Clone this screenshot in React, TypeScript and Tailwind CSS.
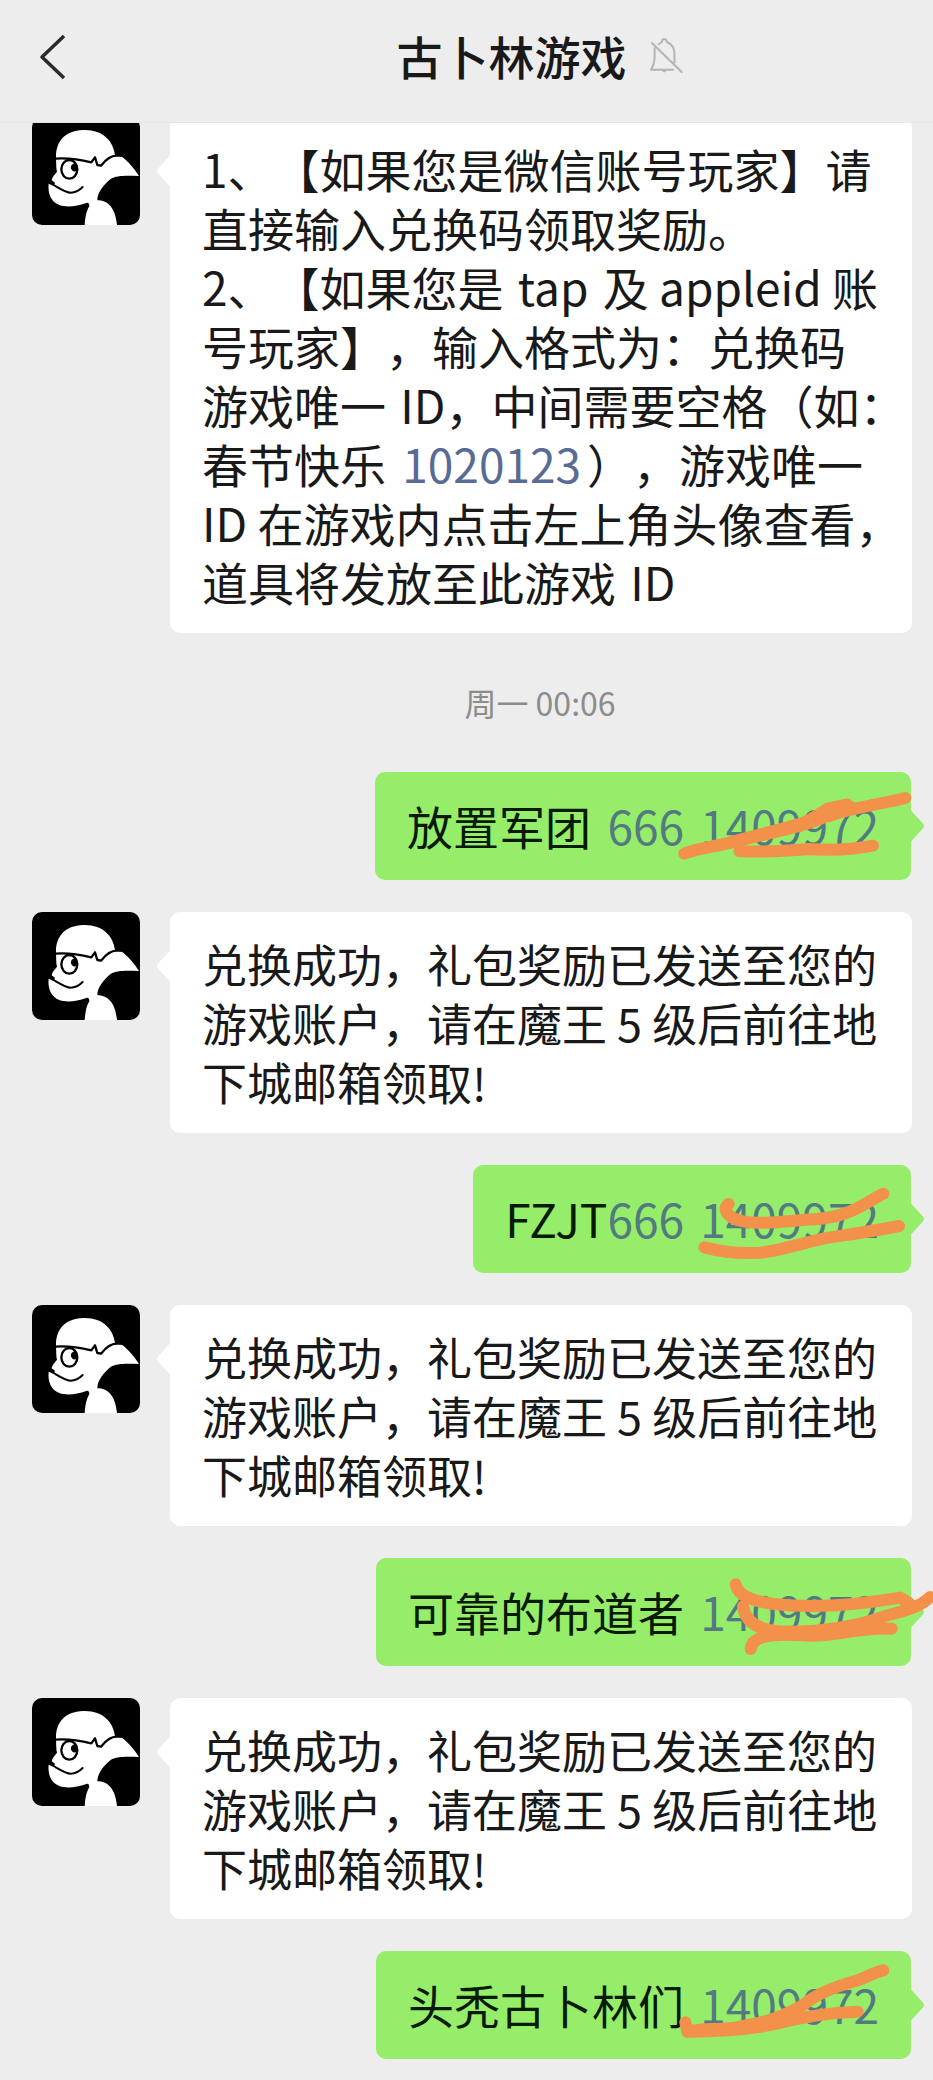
import type { ReactNode } from "react";

function Avatar() {
  return (
    <svg
      viewBox="36 36 324 324"
      role="img"
      aria-label="古卜林游戏"
      className="size-[108px] shrink-0 rounded-[10px] bg-black"
    >
      <path
        fill="#fff"
        d="M108 158C107 112 132 77 190 75C248 73 280 108 285 150L306 155C326 170 344 192 357 213C322 212 290 210 272 222C252 238 232 262 232 286C262 286 286 306 291 360H194C196 334 200 316 208 304C208 296 205 292 199 294C170 304 140 308 118 300C92 290 83 264 86 236L101 243L105 233L95 226C96 216 104 210 111 200C108 190 109 176 108 158Z"
      />
      <g fill="none" stroke="#000" strokeWidth="7" strokeLinejoin="round" strokeLinecap="round">
        <path d="M106 161C145 158 185 165 214 172L225 157L232 180L243 182C254 168 268 152 290 152H304" />
        <ellipse cx="148" cy="193" rx="24" ry="28" />
        <path d="M101 240C125 254 139 263 152 263C165 263 178 256 188 246" strokeWidth="6" />
      </g>
      <path d="M170 177A11 12 0 1 0 170 197Z" />
    </svg>
  );
}

function Received({ children }: { children: ReactNode }) {
  return (
    <li className="flex items-start gap-[30px] pr-[21px] pl-8">
      <Avatar />
      <div className="relative min-w-0 flex-1 rounded-[10px] bg-white px-8 py-[22px] leading-[59px] text-[#191919]">
        <svg viewBox="0 0 14 34" className="absolute top-[37px] -left-[14px] h-[34px] w-[15px]" aria-hidden="true">
          <path fill="#fff" d="M15 0L2 14Q-1 17 2 20L15 34Z" />
        </svg>
        {children}
      </div>
    </li>
  );
}

function Sent({ text, code, id, strokes }: { text: string; code?: string; id: string; strokes: string[] }) {
  return (
    <li className="flex justify-end pr-[22px] pl-8">
      <div className="relative rounded-[10px] bg-[#95ed69] px-8 pt-[23px] pb-[25px] text-[46px] leading-[60px] whitespace-pre text-[#061a00]">
        <svg viewBox="0 0 14 34" className="absolute top-[37px] -right-[14px] h-[34px] w-[15px]" aria-hidden="true">
          <path fill="#95ed69" d="M-1 0L12 14Q15 17 12 20L-1 34Z" />
        </svg>
        {text}
        {code && (
          <a href="#code" className={text.endsWith(" ") ? "ml-1.5 text-[#527a80]" : "text-[#527a80]"}>
            {code}
          </a>
        )}{" "}
        <a href="#id" className="ml-1.5 text-[#527a80]">
          {id}
        </a>
        <svg
          viewBox="0 0 789 324"
          className="pointer-events-none absolute top-0 -right-[22px] h-[108px] w-[263px]"
          aria-hidden="true"
        >
          <g fill="none" stroke="#f3914a" strokeWidth="36" strokeLinecap="round" strokeLinejoin="round">
            {strokes.map((d) => (
              <path key={d} d={d} />
            ))}
          </g>
        </svg>
      </div>
    </li>
  );
}

function Line({ children }: { children: ReactNode }) {
  return <span className="block whitespace-nowrap">{children}</span>;
}

function Reward() {
  return (
    <Received>
      <p className="text-[45px]">
        <Line>兑换成功，礼包奖励已发送至您的</Line>
        <Line>游戏账户，请在魔王 5 级后前往地</Line>
        <Line>下城邮箱领取!</Line>
      </p>
    </Received>
  );
}

export default function App() {
  return (
    <div
      lang="zh-CN"
      className="min-h-screen overflow-hidden bg-[#ededed] font-['Noto_Sans_CJK_SC',sans-serif] [text-spacing-trim:space-all]"
    >
      <header className="relative z-10 flex h-[123px] items-center border-b border-[#e6e6e6] bg-[#ededed] pb-2">
        <button type="button" aria-label="返回" className="flex w-[147px] shrink-0 items-center pl-[38px]">
          <svg viewBox="0 0 30 48" className="h-12 w-[30px]" fill="none" stroke="#2b2b2b" strokeWidth="3.5">
            <path d="M26 3L4 24L26 45" strokeLinejoin="round" />
          </svg>
        </button>
        <div className="flex flex-1 items-center justify-center gap-[22px] pb-1">
          <h1 className="text-[46px] leading-[60px] font-medium text-[#191919]">古卜林游戏</h1>
          <svg
            viewBox="804 52 104 112"
            className="h-[37px] w-[35px]"
            role="img"
            aria-label="消息免打扰"
            fill="none"
            stroke="#b4b4b4"
            strokeWidth="6"
            strokeLinecap="round"
            strokeLinejoin="round"
          >
            <path d="M812 70L902 158M820 86V112Q820 134 809 151H876M832 74Q838 70 842 67Q842 58 849 58Q856 58 857 67Q880 76 880 102V129" />
            <path d="M845 153Q849 160 853 153" />
          </svg>
        </div>
      </header>

      <main className="-mt-[6px] pb-[21px]">
        <ol className="flex flex-col gap-8">
          <Received>
            <p className="text-[46px]">
              <Line>1、【如果您是微信账号玩家】请</Line>
              <Line>直接输入兑换码领取奖励。</Line>
              <Line>
                2、【如果您是 <span className="mx-1">tap</span> 及 appleid 账
              </Line>
              <Line>号玩家】，输入格式为：兑换码</Line>
              <Line>
                游戏唯一 <span className="ml-1">ID</span>，中间需要空格（如：
              </Line>
              <Line>
                春节快乐{" "}
                <a href="#id" className="mx-1.5 text-[#576b95]">
                  1020123
                </a>
                ），游戏唯一
              </Line>
              <Line>ID 在游戏内点击左上角头像查看，</Line>
              <Line>
                道具将发放至此游戏 <span className="ml-1">ID</span>
              </Line>
            </p>
          </Received>

          <li className="pl-[147px] text-center text-[32px] leading-[75px] text-[#8c8c8c]">
            <time>周一 00:06</time>
          </li>

          <Sent
            text="放置军团 "
            code="666"
            id="1409972"
            strokes={[
              "M43 245C80 228 120 228 180 212C250 190 330 175 400 152C450 130 490 105 530 97",
              "M180 212C290 185 400 165 470 132C550 106 640 95 706 78",
              "M390 162L475 109L530 99L545 107L480 132",
              "M208 237C270 242 330 238 420 231C490 237 540 234 609 221",
            ]}
          />
          <Reward />
          <Sent
            text="FZJT"
            code="666"
            id="1409972"
            strokes={[
              "M176 117C160 130 164 150 205 166C260 182 350 168 430 163C540 158 590 110 640 86",
              "M103 247C160 262 210 267 270 263C350 255 420 224 500 214C570 204 620 196 687 183",
            ]}
          />
          <Reward />
          <Sent
            text="可靠的布道者"
            id="1409972"
            strokes={[
              "M197 79C204 115 250 128 310 138C430 152 570 140 690 119",
              "M219 145C226 195 270 218 340 221C450 225 580 200 640 176C690 160 740 155 780 117",
              "M242 273C245 236 300 226 400 232C500 240 560 205 665 212",
              "M320 224L400 226L500 222L610 200",
              "M690 119Q710 128 730 148",
            ]}
          />
          <Reward />
          <Sent
            text="头秃古卜林们"
            id="1409972"
            strokes={[
              "M46 214L52 242C100 230 150 238 210 228C290 218 350 190 400 162C450 118 540 95 560 89C590 80 610 64 640 58",
              "M52 242C150 242 240 236 320 218C410 194 480 184 563 182",
              "M210 226C280 215 340 200 380 184",
            ]}
          />
        </ol>
      </main>
    </div>
  );
}
